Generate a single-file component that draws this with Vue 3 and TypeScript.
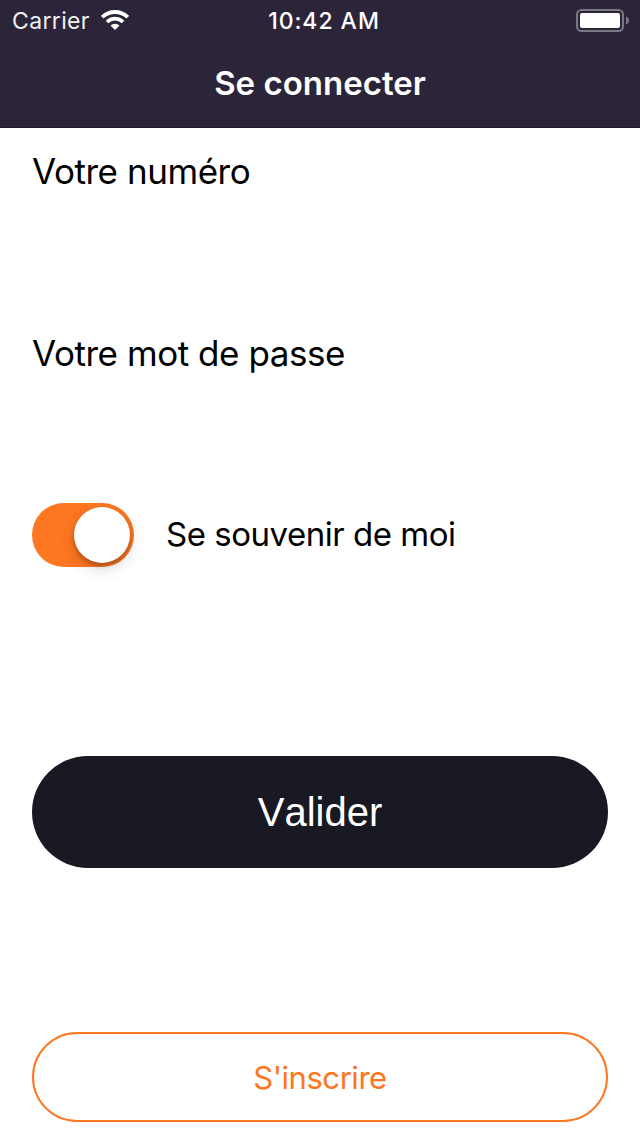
<script setup lang="ts">
import { ref } from 'vue'

const remember = ref<boolean>(true)
</script>

<template>
  <main class="screen">
    <header class="header">
      <div class="status">
        <div class="network">
          <span class="carrier">Carrier</span>
          <svg class="wifi" width="28" height="20" viewBox="0 0 28 20" fill="none">
            <path d="M1.2 7.2A18.3 18.3 0 0 1 26.8 7.2" stroke="#fff" stroke-width="3.9" />
            <path d="M6 12A11.3 11.3 0 0 1 22 12" stroke="#fff" stroke-width="3.7" />
            <path d="M9.5 15.6A6.4 6.4 0 0 1 18.5 15.6L14 20Z" fill="#fff" />
          </svg>
        </div>
        <span class="time">10:42 AM</span>
        <svg class="battery" width="53" height="24" viewBox="0 0 53 24">
          <rect x="1" y="1" width="46" height="21" rx="4.5" fill="none" stroke="#7c7785" stroke-width="2" />
          <rect x="4" y="4" width="40" height="15" rx="2" fill="#fff" />
          <path d="M50 7.5C54 8.7 54 14.3 50 15.5Z" fill="#7c7785" />
        </svg>
      </div>
      <h1 class="title">Se connecter</h1>
    </header>

    <section class="form">
      <label class="field number">Votre numéro</label>
      <label class="field password">Votre mot de passe</label>
      <div class="remember">
        <button
          class="switch"
          :class="{ on: remember }"
          role="switch"
          :aria-checked="remember"
          @click="remember = !remember"
        >
          <span class="knob"></span>
        </button>
        <span class="remember-text">Se souvenir de moi</span>
      </div>
      <button class="submit"><span>Valider</span></button>
      <button class="register"><span>S'inscrire</span></button>
    </section>
  </main>
</template>

<style>
body {
  background: #fff;
}
</style>

<style scoped>
.screen {
  width: 640px;
  height: 1136px;
  overflow: hidden;
  background: #fff;
  color: #000;
  font-family: Inter, "Liberation Sans", sans-serif;
}
button {
  margin: 0;
  padding: 0;
  border: 0;
  font-family: inherit;
}
.header {
  box-sizing: border-box;
  height: 128px;
  background: #2c253a;
  border-bottom: 1px solid #211829;
  color: #fff;
}
.status {
  display: grid;
  grid-template-columns: 1fr auto 1fr;
  align-items: center;
  height: 40px;
  padding: 0 11px 0 12px;
}
.network {
  display: flex;
  align-items: center;
  gap: 11px;
}
.wifi {
  margin-bottom: 2px;
}
.carrier {
  font-size: 23px;
  line-height: 40px;
  letter-spacing: 0.35px;
  color: #f1f0f2;
}
.time {
  font-size: 23px;
  line-height: 40px;
  font-weight: 500;
  letter-spacing: 0.95px;
  padding: 1px 0 0 7px;
}
.battery {
  justify-self: end;
}
.title {
  margin: 23px 0 0;
  font-size: 33px;
  line-height: 40px;
  font-weight: 580;
  text-align: center;
}
.form {
  display: flex;
  flex-direction: column;
  padding: 0 32px;
}
.field {
  font-size: 35px;
  line-height: 44px;
  letter-spacing: -0.45px;
}
.number {
  margin-top: 21px;
}
.password {
  margin-top: 138px;
}
.remember {
  display: flex;
  align-items: center;
  gap: 32px;
  height: 64px;
  margin-top: 128px;
}
.switch {
  display: flex;
  align-items: center;
  box-sizing: border-box;
  width: 102px;
  height: 64px;
  padding: 4px;
  border-radius: 32px;
  background: #ddd;
}
.switch.on {
  justify-content: flex-end;
  background: #fd7620;
}
.knob {
  width: 56px;
  height: 56px;
  border-radius: 50%;
  background: #fff;
  box-shadow: 0 6px 16px rgba(0, 0, 0, 0.15), 0 3px 4px rgba(0, 0, 0, 0.22);
}
.remember-text {
  margin-bottom: 2px;
  font-size: 33px;
  line-height: 40px;
  letter-spacing: -0.48px;
}
.submit {
  height: 112px;
  margin-top: 189px;
  border-radius: 56px;
  background: #191924;
  color: #fff;
  font-family: "Liberation Sans", Arial, sans-serif;
  font-size: 40px;
  font-kerning: none;
}
.register {
  height: 90px;
  margin-top: 164px;
  padding-top: 1px;
  border: 2px solid #fd7620;
  border-radius: 45px;
  background: #fff;
  color: #fd7620;
  font-size: 31px;
  letter-spacing: -0.45px;
}
</style>
